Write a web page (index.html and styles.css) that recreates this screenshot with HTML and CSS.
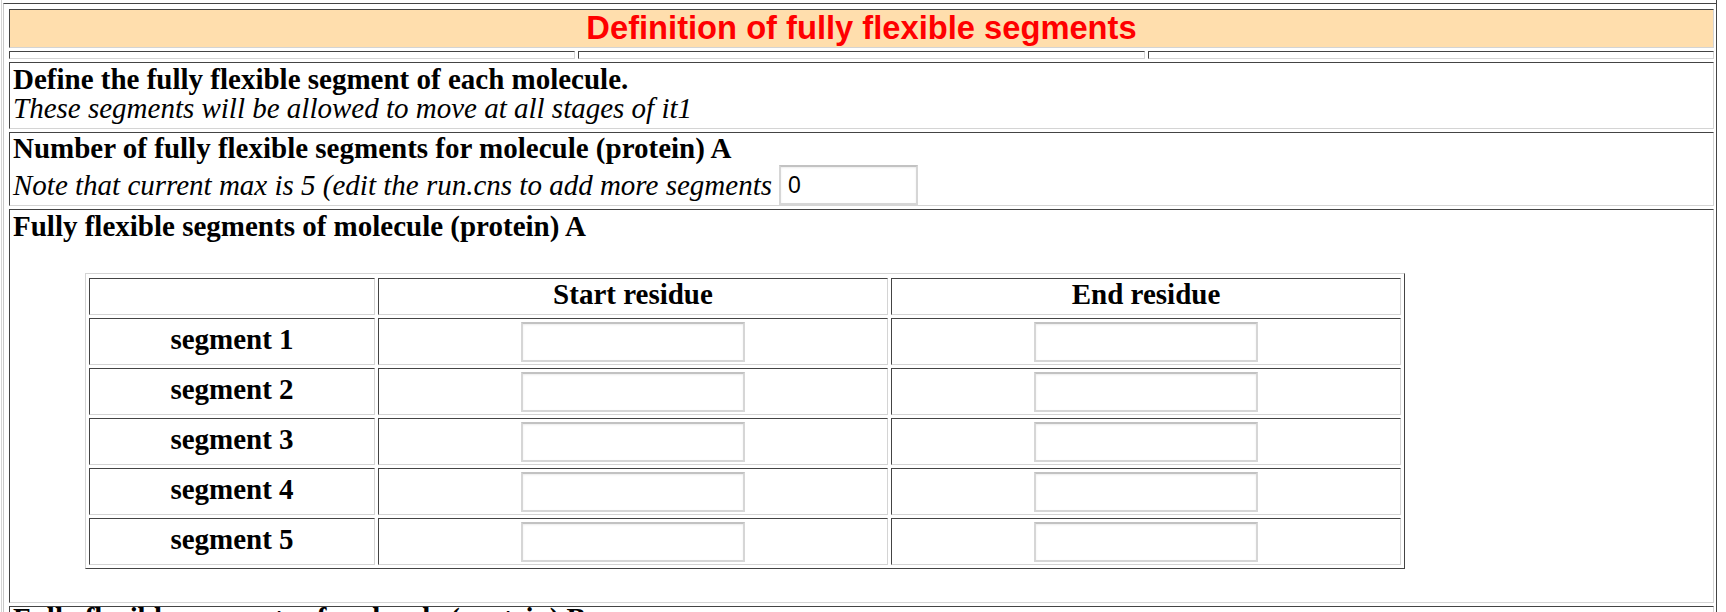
FILE: index.html
```html
<!DOCTYPE html>
<html>
<head>
<meta charset="utf-8">
<title>Definition of fully flexible segments</title>
<link rel="stylesheet" href="styles.css">
</head>
<body>
<div class="frame">
  <div class="outer-cell">
    <div class="form">
      <div class="cell title">Definition of fully flexible segments</div>
      <div class="spacer-row">
        <div class="cell spacer"></div>
        <div class="cell spacer"></div>
        <div class="cell spacer"></div>
      </div>
      <div class="cell row-intro">
        <div class="strong">Define the fully flexible segment of each molecule.</div>
        <div class="note">These segments will be allowed to move at all stages of it1</div>
      </div>
      <div class="cell row-count">
        <div class="strong count-title">Number of fully flexible segments for molecule (protein) A</div>
        <div class="note-line"><span class="note">Note that current max is 5 (edit the run.cns to add more segments</span><input class="count-input" type="text" value="0"></div>
      </div>
      <div class="cell row-segments">
        <div class="strong">Fully flexible segments of molecule (protein) A</div>
        <div class="segtable">
          <div class="cell th"></div>
          <div class="cell th">Start residue</div>
          <div class="cell th">End residue</div>

          <div class="cell td label">segment 1</div>
          <div class="cell td"><input class="res-input" type="text"></div>
          <div class="cell td"><input class="res-input" type="text"></div>

          <div class="cell td label">segment 2</div>
          <div class="cell td"><input class="res-input" type="text"></div>
          <div class="cell td"><input class="res-input" type="text"></div>

          <div class="cell td label">segment 3</div>
          <div class="cell td"><input class="res-input" type="text"></div>
          <div class="cell td"><input class="res-input" type="text"></div>

          <div class="cell td label">segment 4</div>
          <div class="cell td"><input class="res-input" type="text"></div>
          <div class="cell td"><input class="res-input" type="text"></div>

          <div class="cell td label">segment 5</div>
          <div class="cell td"><input class="res-input" type="text"></div>
          <div class="cell td"><input class="res-input" type="text"></div>
        </div>
      </div>
      <div class="cell row-next">
        <div class="strong">Fully flexible segments of molecule (protein) B</div>
      </div>
    </div>
  </div>
</div>
</body>
</html>
```
FILE: styles.css
```css
html, body {
  margin: 0;
  padding: 0;
  background: #ffffff;
}

body {
  font-family: "Liberation Serif", "Times New Roman", serif;
  font-size: 29px;
  line-height: 29px;
  color: #000000;
  height: 612px;
  overflow: hidden;
}

.frame {
  margin: 0 9px 0 1px;
  border-left: 1px solid #d4d4d4;
  border-right: 1px solid #444444;
  padding-top: 3px;
  height: 700px;
}

.outer-cell {
  margin-left: 1px;
  border-top: 1px solid #444444;
  border-left: 1px solid #c8c8c8;
  padding: 5px 2px 0 5px;
}

.form {
  display: grid;
  grid-template-columns: 1fr;
  row-gap: 3px;
}

.cell {
  border: 1px solid;
  border-color: #444444 #d4d4d4 #d4d4d4 #444444;
  padding: 0 3px;
  box-sizing: border-box;
}

.title {
  height: 39px;
  background: #ffdead;
  color: #ff0000;
  text-align: center;
  font-family: "Liberation Sans", Arial, sans-serif;
  font-weight: bold;
  font-size: 32.7px;
  line-height: 35px;
  padding: 0;
}

.spacer-row {
  display: grid;
  grid-template-columns: repeat(3, 1fr);
  column-gap: 3px;
}

.spacer {
  height: 8px;
}

.strong {
  font-weight: bold;
}

.note {
  font-style: italic;
}

.row-intro {
  height: 67px;
  padding-top: 2px;
}

.row-count {
  height: 74px;
  padding-top: 2px;
}

.count-title {
  line-height: 26px;
  margin-bottom: 4px;
}

.note-line {
  height: 40px;
  display: flex;
  align-items: center;
  gap: 7px;
  padding-bottom: 3px;
}

.count-input {
  width: 139px;
  height: 40px;
  box-sizing: border-box;
  border: 2px solid #d6d6d6;
  border-top-color: #c2c2c2;
  box-shadow: inset 0 1px 2px rgba(0, 0, 0, 0.08);
  padding: 0 0 0 7px;
  margin: 0;
  font-family: "Liberation Sans", Arial, sans-serif;
  font-size: 23px;
  color: #000000;
  background: #ffffff;
  outline: none;
}

.row-segments {
  height: 394px;
  padding-top: 2px;
}

.segtable {
  display: grid;
  grid-template-columns: 286px 510px 510px;
  grid-template-rows: 37px repeat(5, 47px);
  gap: 3px;
  width: max-content;
  padding: 4px 3px 3px 3px;
  margin: 32px 0 0 72px;
  border: 1px solid;
  border-color: #d4d4d4 #444444 #444444 #d4d4d4;
}

.th {
  font-weight: bold;
  text-align: center;
  padding: 0;
  line-height: 31px;
}

.td {
  display: flex;
  align-items: center;
  justify-content: center;
  padding: 0;
}

.label {
  font-weight: bold;
  padding-bottom: 4px;
}

.res-input {
  width: 224px;
  height: 40px;
  box-sizing: border-box;
  border: 2px solid #d6d6d6;
  border-top-color: #c2c2c2;
  box-shadow: inset 0 1px 2px rgba(0, 0, 0, 0.08);
  margin: 0;
  padding: 0;
  background: #ffffff;
  outline: none;
}

.row-next {
  height: 60px;
  line-height: 22px;
}
```
